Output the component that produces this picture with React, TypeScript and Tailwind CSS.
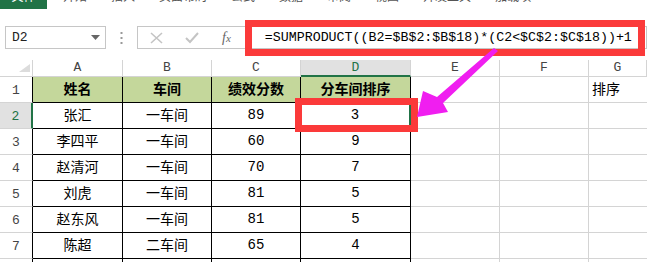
import React from "react";

const mono = { fontFamily: '"Liberation Mono", "Noto Sans CJK SC", monospace' };
const cjk = { fontFamily: '"Liberation Sans", "Noto Sans CJK SC", sans-serif' };

const cols = ["A", "B", "C", "D", "E", "F", "G"];

const rows: string[][] = [
  ["张汇", "一车间", "89", "3"],
  ["李四平", "一车间", "60", "9"],
  ["赵清河", "一车间", "70", "7"],
  ["刘虎", "一车间", "81", "5"],
  ["赵东风", "一车间", "81", "5"],
  ["陈超", "二车间", "65", "4"],
  ["", "", "", ""],
];

const menus = ["开始", "插入", "页面布局", "公式", "数据", "审阅", "视图", "开发工具", "加载项"];

function TopStrip() {
  return (
    <div className="flex h-[9px] overflow-hidden">
      <div className="w-[47px] h-[9px] bg-[#217346] flex justify-center">
        <span className="text-[12px] leading-[12px] text-white mt-[-9px]" style={cjk}>文件</span>
      </div>
      <div className="flex gap-[24px] pl-[16px]">
        {menus.map((m) => (
          <span key={m} className="text-[12px] leading-[12px] text-[#555] mt-[-9px]" style={cjk}>
            {m}
          </span>
        ))}
      </div>
    </div>
  );
}

function FormulaBar() {
  return (
    <div className="flex items-center h-[23px] mt-[17px]">
      <div className="ml-[5px] w-[101px] h-[23px] border border-[#c6c6c6] flex items-center justify-between pl-[6px] pr-[5px]">
        <span className="text-[13px] text-[#222]" style={mono}>D2</span>
        <svg width="9" height="5" viewBox="0 0 9 5">
          <polygon points="0,0 9,0 4.5,5" fill="#666" />
        </svg>
      </div>
      <div className="w-[31px] flex justify-center">
        <svg width="3" height="12" viewBox="0 0 3 12">
          <rect x="0.5" y="0" width="2" height="2" fill="#999" />
          <rect x="0.5" y="5" width="2" height="2" fill="#999" />
          <rect x="0.5" y="10" width="2" height="2" fill="#999" />
        </svg>
      </div>
      <div className="flex-1 h-[23px] border border-[#c6c6c6] flex items-center">
        <svg width="13" height="12" viewBox="0 0 13 12" className="ml-[12px]">
          <path d="M1 1 L12 11 M12 1 L1 11" stroke="#c4c4c4" strokeWidth="1.6" />
        </svg>
        <svg width="14" height="12" viewBox="0 0 14 12" className="ml-[22px]">
          <path d="M1 6 L5 10 L13 1" stroke="#c4c4c4" strokeWidth="2" fill="none" />
        </svg>
        <span className="ml-[23px] text-[14px] italic text-[#666]" style={{ fontFamily: '"Liberation Serif", serif' }}>
          f<span className="text-[11px]">x</span>
        </span>
        <span className="ml-[34px] text-[13.3px] text-black whitespace-nowrap" style={mono}>
          =SUMPRODUCT((B2=$B$2:$B$18)*(C2&lt;$C$2:$C$18))+1
        </span>
      </div>
    </div>
  );
}

function Sheet() {
  return (
    <div className="grid grid-cols-[33px_90px_89px_89px_110px_89px_89px_58px] grid-rows-[17px_repeat(8,26px)] mt-[11px]">
      <div className="border-r border-b border-[#d4d4d4] relative">
        <svg width="11" height="8" viewBox="0 0 11 8" className="absolute right-[2px] bottom-[4px]">
          <polygon points="0,8 11,0 11,8" fill="#dcdcdc" />
        </svg>
      </div>
      {cols.map((c) => (
        <div
          key={c}
          className={
            c === "D"
              ? "flex items-center justify-center bg-[#e1e1e1] border-r border-r-[#d4d4d4] border-b-2 border-b-[#217346] text-[#217346] text-[13px]"
              : "flex items-center justify-center border-r border-b border-[#d4d4d4] text-[#444] text-[13px]"
          }
          style={mono}
        >
          {c}
        </div>
      ))}

      {/* row 1: headers */}
      <div className="flex items-end justify-center pb-[2px] border-r border-r-black border-b border-b-[#d4d4d4] text-[13px] text-[#444]" style={mono}>1</div>
      {["姓名", "车间", "绩效分数", "分车间排序"].map((h) => (
        <div key={h} className="flex items-center justify-center bg-[#c4d79b] border-r border-b border-black font-bold text-[14px] text-black" style={cjk}>
          {h}
        </div>
      ))}
      <div className="border-r border-b border-[#d4d4d4]" />
      <div className="border-r border-b border-[#d4d4d4]" />
      <div className="flex items-center pl-[3px] border-b border-[#d4d4d4] text-[14px] text-black" style={cjk}>排序</div>

      {rows.map((r, i) => {
        const n = i + 2;
        const active = n === 2;
        return (
          <React.Fragment key={n}>
            <div
              className={
                active
                  ? "flex items-end justify-center pb-[2px] bg-[#e1e1e1] border-r-2 border-r-[#217346] border-b border-b-[#d4d4d4] text-[13px] text-[#217346]"
                  : "flex items-end justify-center pb-[2px] border-r border-r-black border-b border-b-[#d4d4d4] text-[13px] text-[#444]"
              }
              style={mono}
            >
              {n}
            </div>
            {r.map((v, j) => (
              <div
                key={j}
                className={
                  active && j === 3
                    ? "flex items-center justify-center border-r-2 border-r-[#217346] border-b border-b-black text-[14px] text-black"
                    : "flex items-center justify-center border-r border-b border-black text-[14px] text-black"
                }
                style={j >= 2 ? mono : cjk}
              >
                {v}
              </div>
            ))}
            <div className="border-r border-b border-[#d4d4d4]" />
            <div className="border-r border-b border-[#d4d4d4]" />
            <div className="border-b border-[#d4d4d4]" />
          </React.Fragment>
        );
      })}
    </div>
  );
}

export default function App() {
  return (
    <div className="relative w-[647px] h-[262px] overflow-hidden bg-white">
      <TopStrip />
      <FormulaBar />
      <Sheet />

      {/* annotations */}
      <div className="absolute left-[408px] top-[127px] w-[5px] h-[5px] bg-[#217346]" />
      <div className="absolute left-[245px] top-[20px] w-[400px] h-[36px] border-[7px] border-[#fb3a3a]" />
      <div className="absolute left-[295px] top-[98px] w-[123px] h-[34px] border-[7px] border-[#fb3a3a]" />
      <svg className="absolute left-0 top-0" width="647" height="262" viewBox="0 0 647 262">
        <polygon
          points="494,48 498,51 443,103 448,112 417,117 423,91 437,97"
          fill="#f01ef0"
        />
      </svg>
    </div>
  );
}
